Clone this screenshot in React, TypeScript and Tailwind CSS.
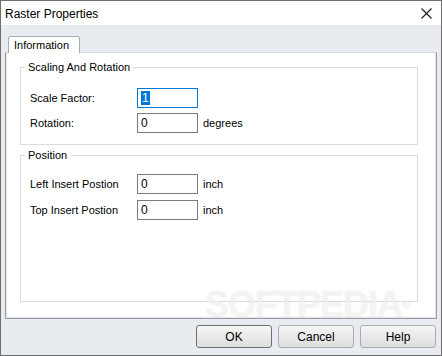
import React from "react";

const font = "font-['Liberation_Sans',Arial,sans-serif]";

const Field: React.FC<{ label: string; value: string; unit?: string; focused?: boolean }> = ({
  label,
  value,
  unit,
  focused,
}) => (
  <div className="flex items-center h-[20px]">
    <span className="w-[107px] text-[11px] text-black">{label}</span>
    <div
      className={`w-[61px] h-[20px] bg-white border flex items-center pl-[3px] text-[12px] ${
        focused ? "border-[#0078d7]" : "border-[#7a7a7a]"
      }`}
    >
      {focused ? (
        <span className="bg-[#0078d7] text-white leading-[14px] px-px">{value}</span>
      ) : (
        <span className="text-black">{value}</span>
      )}
    </div>
    {unit && <span className="ml-[5px] text-[11px] text-black">{unit}</span>}
  </div>
);

const Button: React.FC<{ label: string; primary?: boolean }> = ({ label, primary }) => (
  <button
    className={`w-[76px] h-[23px] rounded-[3px] border text-[12px] text-black bg-gradient-to-b from-[#f6f6f6] to-[#dedede] ${
      primary ? "border-[#707070]" : "border-[#acacac]"
    }`}
  >
    {label}
  </button>
);

export default function App() {
  return (
    <div className={`relative w-[442px] h-[356px] border border-[#6e6e6e] flex flex-col overflow-hidden ${font}`}>
      <div className="h-[24px] bg-white flex items-center justify-between pl-[4px] pr-[9px]">
        <span className="text-[12px] text-black pt-[1px]">Raster Properties</span>
        <svg width="11" height="11" viewBox="0 0 11 11" className="mt-[1px]">
          <path d="M0.5 0.5 L10.5 10.5 M10.5 0.5 L0.5 10.5" stroke="#1a1a1a" strokeWidth="1.1" />
        </svg>
      </div>

      <div className="flex-1 bg-[#e8ebf0] pt-[11px] px-[4px] pb-[7px] flex flex-col">
        <div className="ml-[3px] w-[72px] h-[17px] -mb-px relative z-10 bg-white border border-b-0 border-[#acacac] rounded-t-[3px] flex items-center pl-[5px] text-[11px] text-black">
          Information
        </div>

        <div className="h-[267px] w-[432px] border border-[#9a9ea6] border-t-[#d9d9d9] bg-white">
          <div className="h-full border-l border-r border-b border-[#e3e3e3] pt-[7px]">
            <fieldset className="ml-[13px] w-[398px] border border-[#dcdcdc] pl-[9px] pt-[14px] pb-[11px]">
              <legend className="-ml-[5px] px-[3px] text-[11px] leading-[14px] text-black">Scaling And Rotation</legend>
              <div className="flex flex-col gap-[5px]">
                <Field label="Scale Factor:" value="1" focused />
                <Field label="Rotation:" value="0" unit="degrees" />
              </div>
            </fieldset>

            <fieldset className="mt-[3px] ml-[13px] w-[398px] h-[154px] border border-[#dcdcdc] pl-[9px] pt-[12px]">
              <legend className="-ml-[5px] px-[3px] text-[11px] leading-[14px] text-black">Position</legend>
              <div className="flex flex-col gap-[6px]">
                <Field label="Left Insert Postion" value="0" unit="inch" />
                <Field label="Top Insert Postion" value="0" unit="inch" />
              </div>
            </fieldset>
          </div>
        </div>

        <div className="mt-[6px] flex justify-end gap-[6px] pr-[1px]">
          <Button label="OK" primary />
          <Button label="Cancel" />
          <Button label="Help" />
        </div>
      </div>

      <div className="absolute left-[204px] top-[284px] text-[36px] leading-[40px] font-bold tracking-[-1px] text-white/60 [text-shadow:0_0_1px_rgba(160,160,160,0.3)] pointer-events-none select-none">
        SOFTPEDIA<span className="text-[11px] align-top">®</span>
      </div>
    </div>
  );
}
